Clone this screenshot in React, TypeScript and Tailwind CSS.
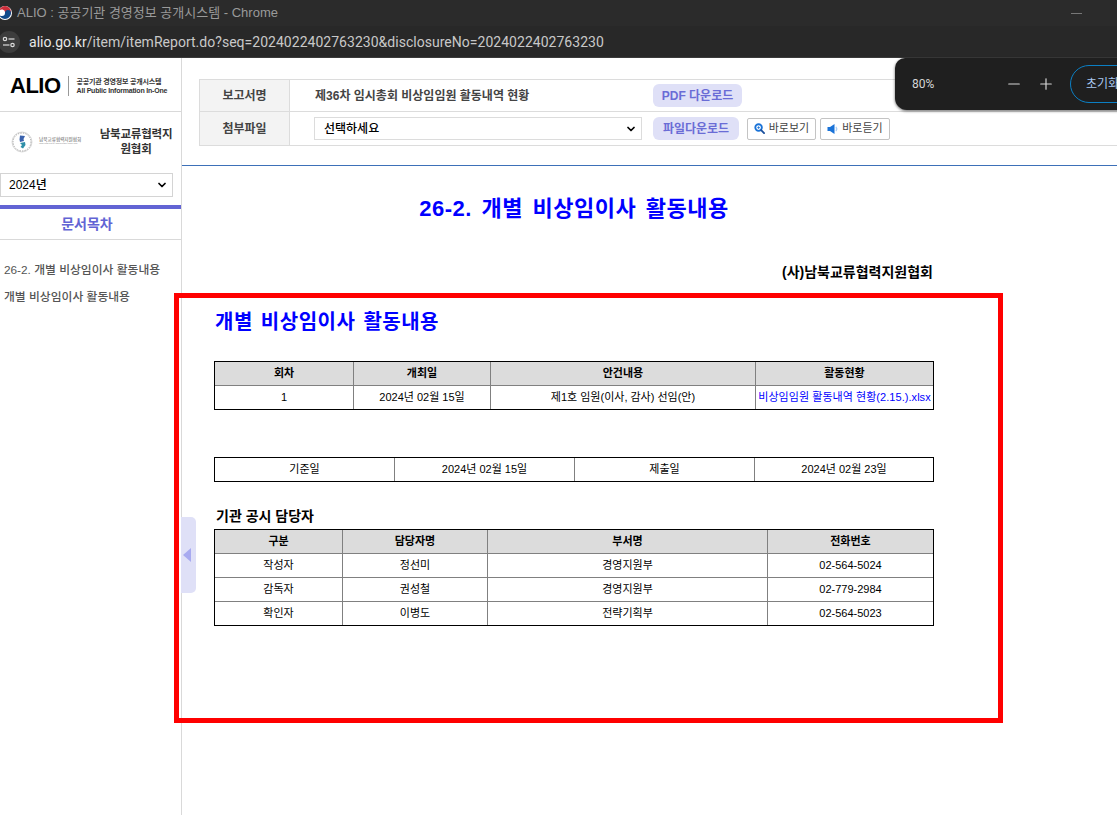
import React from 'react';
import { ChevronDown, Minus, Plus } from 'lucide-react';

const kr = '[font-family:"Liberation_Sans","Noto_Sans_CJK_KR",sans-serif]';

const Cell = ({ w, head, children }: { w: string; head?: boolean; children: React.ReactNode }) => (
  <div
    className={`${w} flex items-center justify-center border-r border-[#808080] last:border-r-0 text-[11px] text-black ${head ? 'bg-[#dcdcdc] font-bold' : ''}`}
  >
    {children}
  </div>
);

const Row = ({ cols, cells, head, last }: { cols: string[]; cells: React.ReactNode[]; head?: boolean; last?: boolean }) => (
  <div className={`flex ${last ? 'h-[23px]' : 'h-6 border-b border-[#808080]'}`}>
    {cells.map((c, i) => (
      <Cell key={i} w={cols[i]} head={head}>
        {c}
      </Cell>
    ))}
  </div>
);

const Sidebar = () => (
  <aside className="w-[182px] shrink-0 border-r border-[#d9d9d9] min-h-full">
    <div className="h-[54px] border-b border-[#d9d9d9] flex items-center pl-[10px] pt-[2px]">
      <span className="text-[22px] font-bold text-black tracking-[-0.5px] leading-none">ALIO</span>
      <div className="w-px h-[20px] bg-[#999] ml-[7px] mr-[8px]" />
      <div className="flex flex-col leading-[9px] text-[7px] tracking-[-0.2px] font-bold text-[#333] whitespace-nowrap">
        <span>공공기관 경영정보 공개시스템</span>
        <span>All Public Information In-One</span>
      </div>
    </div>
    <div className="h-[59px] flex items-center pl-[11px]">
      <svg viewBox="0 0 22 22" className="w-[22px] h-[22px] shrink-0">
        <circle cx="11" cy="11" r="10" fill="none" stroke="#c4c4c4" strokeWidth="0.6" />
        <circle cx="11" cy="11" r="9" fill="none" stroke="#9a9a9a" strokeWidth="0.9" strokeDasharray="1 0.8" pathLength="40" />
        <path d="M9 4.5 L14 5 L12.5 8 L13 10 L9 11 L8.5 8.5 Z" fill="#3a62ad" />
        <path d="M9 12 L14 11 L14.5 14 L12 17.5 L9.5 16 L11 14 Z" fill="#2f8fa8" />
      </svg>
      <div className="ml-[6px] w-[42px] flex flex-col leading-[4px] whitespace-nowrap">
        <span className="text-[4.6px] text-[#555]">남북교류협력지원협회</span>
        <span className="text-[1.5px] text-[#888]">INTER-KOREAN EXCHANGE SUPPORT ASSOCIATION</span>
      </div>
      <div className="ml-[18px] w-[74px] text-center text-[11.5px] font-bold leading-[15px] text-[#333] tracking-[-0.2px]">
        남북교류협력지
        <br />
        원협회
      </div>
    </div>
    <div className="pr-[8px] h-[32px] pt-[2px]">
      <div className="h-[24px] border border-[#d4d4d4] flex items-center justify-between pl-[8px] pr-[4px] text-[12px] font-medium text-black">
        2024년
        <ChevronDown size={12} strokeWidth={3.5} />
      </div>
    </div>
    <div className="h-[4px] bg-[#6264d4] mt-[2px]" />
    <div className="h-[31px] border-b border-[#d9d9d9] flex items-center justify-center pr-[7px] text-[14px] font-bold text-[#6264d4]">
      문서목차
    </div>
    <div className="pt-[21px] pl-[4px] text-[11.8px] font-medium text-[#555] flex flex-col gap-[9px] leading-[18px]">
      <span>26-2. 개별 비상임이사 활동내용</span>
      <span>개별 비상임이사 활동내용</span>
    </div>
  </aside>
);

const InfoBar = () => (
  <div className="h-[108px] border-b border-[#3d70b8] pt-[21px] pl-[17px]">
    <div className="w-[1000px] border border-[#dcdcdc] text-[12px]">
      <div className="flex h-[32px] border-b border-[#dcdcdc]">
        <div className="w-[90px] bg-[#f3f3f3] border-r border-[#dcdcdc] flex items-center justify-center font-bold text-[#444]">
          보고서명
        </div>
        <div className="flex items-center pl-[25px] w-[363px] font-bold text-[#444]">제36차 임시총회 비상임임원 활동내역 현황</div>
        <button className="self-center h-[23px] w-[89px] rounded-[6px] bg-[#dfe0f7] text-[#6a6cd6] font-bold flex items-center justify-center">
          PDF 다운로드
        </button>
      </div>
      <div className="flex h-[33px]">
        <div className="w-[90px] bg-[#f3f3f3] border-r border-[#dcdcdc] flex items-center justify-center font-bold text-[#444]">
          첨부파일
        </div>
        <div className="flex items-center pl-[24px] w-[363px]">
          <div className="w-[328px] h-[23px] border border-[#dcdcdc] flex items-center justify-between pl-[9px] pr-[4px] font-medium text-black">
            선택하세요
            <ChevronDown size={12} strokeWidth={3.5} />
          </div>
        </div>
        <div className="flex items-center">
          <button className="h-[23px] w-[86px] rounded-[6px] bg-[#dfe0f7] text-[#6a6cd6] font-bold flex items-center justify-center">
            파일다운로드
          </button>
          <button className="ml-[8px] h-[22px] w-[69px] rounded-[2px] border border-[#c4c4c4] bg-white text-[#444] text-[11px] flex items-center justify-center gap-[4px]">
            <svg viewBox="0 0 12 12" className="w-[11px] h-[11px]">
              <circle cx="5" cy="5" r="3.6" fill="none" stroke="#1a73d8" strokeWidth="2" />
              <path d="M3.6 5 H6.4 M5 3.6 V6.4" stroke="#1a73d8" strokeWidth="1" />
              <path d="M7.8 7.8 L11 11" stroke="#1a4f9c" strokeWidth="2" strokeLinecap="round" />
            </svg>
            바로보기
          </button>
          <button className="ml-[4px] h-[22px] w-[70px] rounded-[2px] border border-[#c4c4c4] bg-white text-[#444] text-[11px] flex items-center justify-center gap-[3px]">
            <svg viewBox="0 0 12 12" className="w-[12px] h-[12px]">
              <path d="M0.5 4 H3 L7.5 1 V11 L3 8 H0.5 Z" fill="#1a73d8" />
              <path d="M9 4 Q10.5 6 9 8" fill="none" stroke="#a9cdf5" strokeWidth="1.4" />
            </svg>
            바로듣기
          </button>
        </div>
      </div>
    </div>
  </div>
);

const Doc = () => {
  const c1 = ['w-[139px]', 'w-[137px]', 'w-[265px]', 'w-[177px]'];
  const c2 = ['w-[180px]', 'w-[180px]', 'w-[180px]', 'w-[178px]'];
  const c3 = ['w-[128px]', 'w-[145px]', 'w-[280px]', 'w-[165px]'];
  return (
    <div className="w-[720px] ml-[32px]">
      <h1 className="mt-[26px] h-[34px] text-center text-[22px] font-bold text-[#0000ff] leading-[34px] tracking-[0.5px] [word-spacing:3px]">
        26-2. 개별 비상임이사 활동내용
      </h1>
      <p className="mt-[37px] text-right text-[14px] font-bold text-black leading-[18px] pr-px">(사)남북교류협력지원협회</p>
      <h2 className="mt-[27px] pl-px text-[20px] font-bold text-[#0000ff] leading-[28px] tracking-[0.5px] [word-spacing:2px]">
        개별 비상임이사 활동내용
      </h2>
      <div className="mt-[25px] border border-black">
        <Row cols={c1} head cells={['회차', '개최일', '안건내용', '활동현황']} />
        <Row
          cols={c1}
          last
          cells={[
            '1',
            '2024년 02월 15일',
            '제1호 임원(이사, 감사) 선임(안)',
            <span className="text-[#0000ff] text-[11px] tracking-[0.05px] whitespace-nowrap">비상임임원 활동내역 현황(2.15.).xlsx</span>,
          ]}
        />
      </div>
      <div className="mt-[47px] border border-black">
        <Row cols={c2} last cells={['기준일', '2024년 02월 15일', '제출일', '2024년 02월 23일']} />
      </div>
      <h3 className="mt-[25px] pl-[2px] h-[18px] text-[14px] font-bold text-black leading-[18px]">기관 공시 담당자</h3>
      <div className="mt-[4px] border border-black">
        <Row cols={c3} head cells={['구분', '담당자명', '부서명', '전화번호']} />
        <Row cols={c3} cells={['작성자', '정선미', '경영지원부', '02-564-5024']} />
        <Row cols={c3} cells={['감독자', '권성철', '경영지원부', '02-779-2984']} />
        <Row cols={c3} last cells={['확인자', '이병도', '전략기획부', '02-564-5023']} />
      </div>
    </div>
  );
};

export default function App() {
  return (
    <div className={`relative w-[1117px] h-[815px] overflow-hidden bg-white ${kr}`}>
      <div className="h-[26px] bg-[#2b2b2b] flex items-center text-[13px] text-[#9a9a9a]">
        <svg viewBox="0 0 14 14" className="w-[14px] h-[14px] ml-[-2px] mr-[5px] shrink-0">
          <circle cx="7" cy="7" r="7" fill="#fff" />
          <path d="M1 6 A6 6 0 0 1 13 6 A3 3 0 0 1 7 7 A3 3 0 0 0 1 6 Z" fill="#cd2e3a" />
          <path d="M1 7 A3 3 0 0 0 7 7 A3 3 0 0 1 13 7 A6 6 0 0 1 1 7 Z" fill="#0f4a8a" />
        </svg>
        ALIO : 공공기관 경영정보 공개시스템 - Chrome
        <span className="ml-auto mr-[35px] w-[11px] h-px bg-[#777]" />
      </div>
      <div className="h-[32px] bg-[#282828] flex items-center border-b border-[#3b3b3b]">
        <div className="w-[22px] h-[22px] rounded-full bg-[#3d3d3d] ml-[-2px] mr-[9px] flex items-center justify-center shrink-0">
          <svg viewBox="0 0 14 12" className="w-[14px] h-[12px]" fill="none" stroke="#dcdcdc" strokeWidth="1.2">
            <circle cx="3" cy="3" r="1.7" />
            <path d="M6.5 3 H12.5" />
            <path d="M1 9 H7.5" />
            <circle cx="10.5" cy="9" r="1.7" />
          </svg>
        </div>
        <span className="text-[14px] text-[#c8c8c8] tracking-[0.025px] pt-[1px] [font-family:Roboto,sans-serif]">
          <span className="text-[#e8e8e8]">alio.go.kr</span>/item/itemReport.do?seq=2024022402763230&amp;disclosureNo=2024022402763230
        </span>
      </div>
      <div className="flex h-[757px]">
        <Sidebar />
        <main className="flex-1 min-w-0">
          <InfoBar />
          <Doc />
        </main>
      </div>

      {/* sidebar toggle */}
      <div className="absolute left-[181px] top-[517px] w-[15px] h-[76px] rounded-r-[5px] bg-[#dfe0f7] flex items-center">
        <span className="ml-[2px] w-0 h-0 border-y-[7px] border-y-transparent border-r-[8px] border-r-[#a8aaf0]" />
      </div>

      {/* red annotation box */}
      <div className="absolute left-[174px] top-[293px] w-[829px] h-[430px] border-[5px] border-[#ff0000] pointer-events-none" />

      {/* chrome zoom bubble */}
      <div className="absolute left-[895px] top-[58px] w-[280px] h-[52px] rounded-bl-[12px] rounded-tl-[10px] bg-[#1f1f1f] shadow-[0_1px_3px_rgba(0,0,0,0.6)] flex items-center text-[#d6d6d6]">
        <span className="ml-[17px] w-[93px] shrink-0 text-[12px] [font-family:Roboto,sans-serif]">80%</span>
        <Minus size={18} strokeWidth={1.6} className="shrink-0" />
        <Plus size={18} strokeWidth={1.6} className="ml-[14px] shrink-0" />
        <div className="ml-[15px] h-[38px] w-[90px] rounded-full border border-[#0b7fc4] flex items-center pl-[15px] text-[12px] text-[#a8c8f0] shrink-0">
          초기화
        </div>
      </div>
    </div>
  );
}
